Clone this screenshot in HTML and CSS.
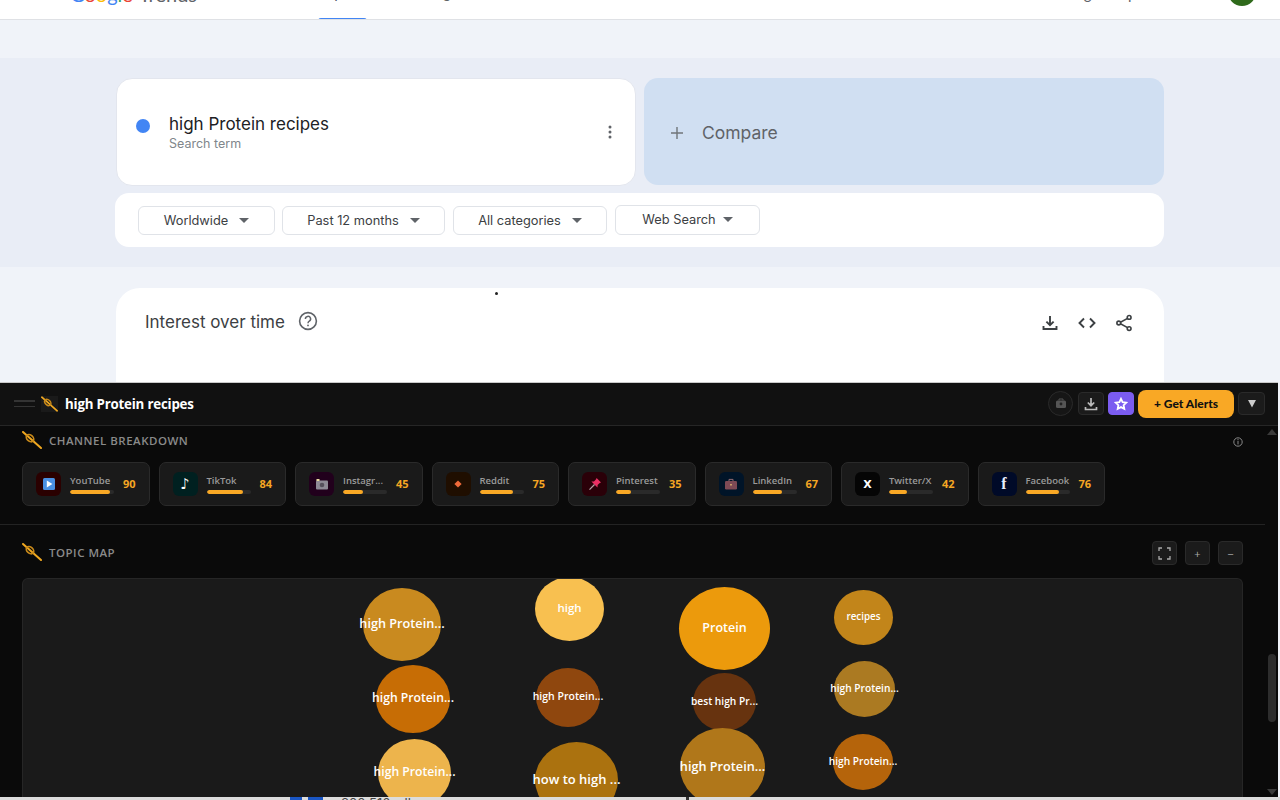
FILE: index.html
```html
<!DOCTYPE html>
<html lang="en">
<head>
<meta charset="utf-8">
<title>Google Trends</title>
<link rel="stylesheet" href="styles.css">
</head>
<body>
<svg class="defs" width="0" height="0" aria-hidden="true">
  <symbol id="wheat" viewBox="0 0 20 18">
    <path d="M1 1L19 17" stroke="#f0a820" stroke-width="2" stroke-linecap="round" fill="none"/>
    <ellipse cx="8" cy="7.2" rx="4.2" ry="3" transform="rotate(42 8 7.2)" fill="none" stroke="#c98a1a" stroke-width="1.7"/>
  </symbol>
</svg>
<div class="app">
  <header class="topbar">
    <div class="brand"><span class="g-b">G</span><span class="g-r">o</span><span class="g-y">o</span><span class="g-b">g</span><span class="g-g">l</span><span class="g-r">e</span> <span class="brand-t">Trends</span></div>
    <nav class="tabs">
      <span class="tab tab-active">Explore</span>
      <span class="tab">Trending now</span>
    </nav>
    <span class="top-link">Sign up</span>
    <span class="avatar"></span>
  </header>
  <div class="spacer"></div>
  <section class="band">
    <div class="terms">
      <div class="term">
        <span class="dot"></span>
        <div class="term-text">
          <div class="term-name">high Protein recipes</div>
          <div class="term-sub">Search term</div>
        </div>
        <svg class="kebab" width="4" height="14" viewBox="0 0 4 14"><circle cx="2" cy="2" r="1.5"/><circle cx="2" cy="7" r="1.5"/><circle cx="2" cy="12" r="1.5"/></svg>
      </div>
      <div class="compare">
        <svg width="14" height="14" viewBox="0 0 14 14"><path d="M7 1v12M1 7h12" stroke="#70757a" stroke-width="1.4"/></svg>
        <span>Compare</span>
      </div>
    </div>
    <div class="filters">
      <div class="filter f1">Worldwide<i class="caret"></i></div>
      <div class="filter f2">Past 12 months<i class="caret"></i></div>
      <div class="filter f3">All categories<i class="caret"></i></div>
      <div class="filter f4">Web Search<i class="caret"></i></div>
    </div>
  </section>
  <section class="lower">
    <div class="iot">
      <h2 class="iot-title">Interest over time</h2>
      <svg class="help" width="20" height="20" viewBox="0 0 20 20"><circle cx="10" cy="10" r="8.4" fill="none" stroke="#5f6368" stroke-width="1.6"/><path d="M7.4 8a2.6 2.6 0 1 1 3.9 2.2c-.9.5-1.3 1-1.3 2" fill="none" stroke="#5f6368" stroke-width="1.5"/><circle cx="10" cy="14.4" r=".9" fill="#5f6368"/></svg>
      <div class="iot-tools">
        <svg width="18" height="18" viewBox="0 0 18 18"><path d="M9 2v9M5.4 7.6L9 11.2l3.6-3.6M2.5 12v3h13v-3" fill="none" stroke="#3c4043" stroke-width="1.9"/></svg>
        <svg width="20" height="18" viewBox="0 0 20 18"><path d="M7 4.5L2.5 9 7 13.5M13 4.5L17.5 9 13 13.5" fill="none" stroke="#3c4043" stroke-width="1.9"/></svg>
        <svg width="18" height="18" viewBox="0 0 20 20"><path d="M15.5 4L4.500 10l11 6" fill="none" stroke="#3c4043" stroke-width="1.8"/><circle cx="15.700" cy="3.800" r="2.100" fill="#fff" stroke="#3c4043" stroke-width="1.800"/><circle cx="4.200" cy="10" r="2.100" fill="#fff" stroke="#3c4043" stroke-width="1.800"/><circle cx="15.700" cy="16.200" r="2.100" fill="#fff" stroke="#3c4043" stroke-width="1.800"/></svg>
      </div>
    </div>
    <span class="speck"></span>
  </section>
  <section class="panel">
    <div class="panel-head">
      <span class="burger"><i></i><i></i></span>
      <span class="head-icon"><svg width="17" height="16"><use href="#wheat"/></svg></span>
      <h1 class="panel-title">high Protein recipes</h1>
      <div class="head-actions">
        <button class="round-btn"><svg width="12" height="11" viewBox="0 0 12 11"><rect x="1" y="2.500" width="10" height="7.500" rx="1.500" fill="#555"/><path d="M4 2.500V1h4v1.500" stroke="#555" fill="none"/><circle cx="6" cy="6" r="1.400" fill="#222"/></svg></button>
        <button class="sq-btn"><svg width="14" height="14" viewBox="0 0 14 14"><path d="M7 1v7.500M3.800 5.500L7 8.700l3.200-3.200M1.500 10v2.500h11V10" fill="none" stroke="#bbb" stroke-width="1.700"/></svg></button>
        <button class="sq-btn star-btn"><svg width="14" height="14" viewBox="0 0 14 14"><path d="M7 1.800l1.600 3.400 3.700.5-2.700 2.500.7 3.700L7 10.100l-3.300 1.800.7-3.700L1.700 5.700l3.700-.5z" fill="none" stroke="#fff" stroke-width="1.800"/></svg></button>
        <button class="alert-btn">+ Get Alerts</button>
        <button class="sq-btn drop-btn"><svg width="10" height="9" viewBox="0 0 10 9"><path d="M1 1h8L5 8.400z" fill="#ccc"/></svg></button>
      </div>
    </div>
    <div class="panel-body">
      <div class="scrollbar">
        <i class="sb-up"></i>
        <i class="sb-thumb"></i>
        <i class="sb-down"></i>
      </div>
      <div class="sec sec-channels">
        <div class="sec-head">
          <svg width="20" height="18"><use href="#wheat"/></svg>
          <h3 class="sec-title">CHANNEL BREAKDOWN</h3>
          <svg class="info" width="10" height="10" viewBox="0 0 10 10"><circle cx="5" cy="5" r="4.200" fill="none" stroke="#888"/><path d="M5 4v3.400" stroke="#888"/><circle cx="5" cy="2.700" r=".6" fill="#888"/></svg>
        </div>
        <div class="channels">
          <div class="ch">
            <span class="ch-ic ic-yt"><svg width="14" height="14" viewBox="0 0 14 14"><rect x="1" y="1" width="12" height="12" rx="1.500" fill="#4a90e2"/><path d="M4.800 3.600L10.400 7l-5.600 3.400z" fill="#fff"/></svg></span>
            <div class="ch-mid"><span class="ch-name">YouTube</span><span class="bar"><i class="fill w90"></i></span></div>
            <b class="ch-val">90</b>
          </div>
          <div class="ch">
            <span class="ch-ic ic-tt"><span class="glyph glyph-n">♪</span></span>
            <div class="ch-mid"><span class="ch-name">TikTok</span><span class="bar"><i class="fill w84"></i></span></div>
            <b class="ch-val">84</b>
          </div>
          <div class="ch">
            <span class="ch-ic ic-ig"><svg width="14" height="12" viewBox="0 0 14 12"><rect x="1" y="2.500" width="12" height="9" rx="1" fill="#8e8a96"/><circle cx="7" cy="7" r="2.300" fill="#55505c"/><rect x="1.500" y="1" width="3" height="2" fill="#e8d9a0"/></svg></span>
            <div class="ch-mid"><span class="ch-name">Instagr...</span><span class="bar"><i class="fill w45"></i></span></div>
            <b class="ch-val">45</b>
          </div>
          <div class="ch">
            <span class="ch-ic ic-rd"><svg width="8" height="8" viewBox="0 0 8 8"><path d="M4 .4L7.600 4 4 7.600.4 4z" fill="#ef6a3a"/></svg></span>
            <div class="ch-mid"><span class="ch-name">Reddit</span><span class="bar"><i class="fill w75"></i></span></div>
            <b class="ch-val">75</b>
          </div>
          <div class="ch">
            <span class="ch-ic ic-pt"><svg width="14" height="14" viewBox="0 0 14 14"><path d="M8.600 1L13 5.400 11.700 5.900 9.600 8 9.500 10.600 3.400 4.500 6 4.400 8.100 2.300z" fill="#ea2f63"/><path d="M6.500 7.500L1.500 12.700" stroke="#b4a3a8" stroke-width="1.200"/></svg></span>
            <div class="ch-mid"><span class="ch-name">Pinterest</span><span class="bar"><i class="fill w35"></i></span></div>
            <b class="ch-val">35</b>
          </div>
          <div class="ch">
            <span class="ch-ic ic-li"><svg width="14" height="12" viewBox="0 0 14 12"><rect x="1" y="3" width="12" height="8.500" rx="1.200" fill="#7d4a55"/><path d="M5 3V1.400h4V3" stroke="#8f6a70" fill="none"/><rect x="6" y="6" width="2" height="1.500" fill="#c9a06a"/></svg></span>
            <div class="ch-mid"><span class="ch-name">LinkedIn</span><span class="bar"><i class="fill w67"></i></span></div>
            <b class="ch-val">67</b>
          </div>
          <div class="ch">
            <span class="ch-ic ic-x"><span class="glyph glyph-x">X</span></span>
            <div class="ch-mid"><span class="ch-name">Twitter/X</span><span class="bar"><i class="fill w42"></i></span></div>
            <b class="ch-val">42</b>
          </div>
          <div class="ch">
            <span class="ch-ic ic-fb"><span class="glyph glyph-f">f</span></span>
            <div class="ch-mid"><span class="ch-name">Facebook</span><span class="bar"><i class="fill w76"></i></span></div>
            <b class="ch-val">76</b>
          </div>
        </div>
      </div>
      <div class="sec sec-map">
        <div class="sec-head map-head">
          <svg width="20" height="18"><use href="#wheat"/></svg>
          <h3 class="sec-title">TOPIC MAP</h3>
          <div class="map-tools">
            <button class="map-btn"><svg width="13" height="13" viewBox="0 0 13 13"><path d="M1 4V1h3M9 1h3v3M12 9v3H9M4 12H1V9" fill="none" stroke="#aaa" stroke-width="1.300"/></svg></button>
            <button class="map-btn">+</button>
            <button class="map-btn">−</button>
          </div>
        </div>
        <div class="map">
          <div class="bub b1 t127">high Protein...</div>
          <div class="bub b2 t12">high</div>
          <div class="bub b3 t125">Protein</div>
          <div class="bub b4 t10">recipes</div>
          <div class="bub b5 t123">high Protein...</div>
          <div class="bub b6 t11">high Protein...</div>
          <div class="bub b7 t102">best high Pr...</div>
          <div class="bub b8 t102">high Protein...</div>
          <div class="bub b9 t123">high Protein...</div>
          <div class="bub b10 t13">how to high ...</div>
          <div class="bub b11 t127">high Protein...</div>
          <div class="bub b12 t102">high Protein...</div>
        </div>
      </div>
    </div>
  </section>
  <footer class="strip"><i class="strip-blue sb1"></i><i class="strip-blue sb2"></i><span class="strip-text">800 516 s ll</span><i class="strip-mark"></i></footer>
</div>
</body>
</html>
```

FILE: styles.css
```css
* { box-sizing: border-box; }
html, body { margin: 0; height: 100%; overflow: hidden; }
body { font-family: "Open Sans", "Noto Sans", sans-serif; background: #f0f3f9; }
.defs { position: absolute; }
button { font: inherit; padding: 0; border: 0; cursor: pointer; }
h1, h2, h3 { margin: 0; font-weight: inherit; }

.app { width: 1280px; height: 800px; display: flex; flex-direction: column; }

.topbar { height: 20px; flex: none; background: #fff; border-bottom: 1px solid #dfe1e5; display: flex; align-items: flex-end; padding-left: 70px; font-family: "Lato", sans-serif; overflow: hidden; position: relative; }
.brand { width: 248px; font-size: 20px; line-height: 26px; margin-bottom: 12px; color: #5f6368; white-space: nowrap; flex: none; }
.g-b { color: #4285f4; } .g-r { color: #ea4335; } .g-y { color: #fbbc05; } .g-g { color: #34a853; }
.brand-t { margin-left: 1px; }
.tabs { display: flex; flex: none; width: 700px; height: 30px; margin-bottom: -1px; align-items: flex-end; }
.tab { font-size: 15px; line-height: 20px; padding: 0 0 6px; color: #5f6368; white-space: nowrap; width: 49px; margin-right: 27px; text-align: center; position: relative; top: -12px; }
.tab-active { color: #4a5568; }
.tab-active::after { content: ""; position: absolute; left: 0; right: 0; bottom: -13px; height: 3px; border-radius: 3px 3px 0 0; background: #4285f4; }
.top-link { font-size: 15px; color: #5f6368; line-height: 20px; word-spacing: 16px; position: absolute; left: 1072px; top: -17px; }
.avatar { position: absolute; left: 1228px; top: -22px; width: 28px; height: 28px; border-radius: 50%; background: #2f6a1b; }

.spacer { height: 38px; flex: none; }
.band { height: 209px; flex: none; background: #e9edf6; padding: 20px 116px 0; font-family: "Inter", "Lato", sans-serif; }
.terms { display: flex; gap: 8px; height: 108px; }
.term { width: 520px; height: 108px; background: #fff; border: 1px solid #e3e6ee; border-radius: 16px; display: flex; align-items: center; padding: 0 23px 0 19px; }
.dot { width: 14px; height: 14px; border-radius: 50%; background: #4285f4; margin-right: 19px; flex: none; margin-top: -13px; }
.term-text { flex: 1; }
.term-name { font-size: 17px; line-height: 22px; color: #202124; }
.term-sub { font-size: 12.500px; line-height: 17px; color: #80868b; margin-top: 0; }
.kebab { fill: #5f6368; }
.compare { width: 520px; height: 107px; background: #d0dff2; border-radius: 14px; display: flex; align-items: center; gap: 18px; padding: 2px 0 0 26px; font-size: 17.500px; color: #5f6368; }
.filters { margin: 7px 0 0 -1px; width: 1049px; height: 54px; background: #fff; border-radius: 14px; display: flex; align-items: flex-start; padding: 13px 0 0 23px; gap: 7px; }
.filter { height: 29px; display: flex; align-items: center; justify-content: center; gap: 11px; background: #fff; border: 1px solid #e0e3e8; border-radius: 6px; font-size: 12.800px; color: #3c4043; white-space: nowrap; }
.f1 { width: 137px; } .f2 { width: 163px; } .f3 { width: 154px; margin-left: 1px; } .f4 { width: 145px; height: 30px; margin-top: -1px; margin-left: 1px; gap: 7px; padding-bottom: 1px; }
.caret { width: 0; height: 0; border: 5px solid transparent; border-top: 5px solid #5f6368; border-bottom: 0; display: block; }

.lower { flex: 1; padding: 21px 116px 0; position: relative; min-height: 0; font-family: "Inter", "Lato", sans-serif; }
.iot { height: 94px; background: #fff; border-radius: 24px 24px 0 0; display: flex; align-items: flex-start; padding: 22px 31px 0 29px; }
.iot-title { font-size: 17px; line-height: 25px; color: #3c4043; }
.help { margin: 1px 0 0 13px; }
.iot-tools { margin-left: auto; display: flex; gap: 18px; padding-top: 4px; align-items: center; }
.speck { position: absolute; left: 495px; top: 25px; width: 3px; height: 3px; border-radius: 50%; background: #222; }

.panel { height: 415px; flex: none; background: #0a0a0a; border-top: 1px solid #c9c9c9; display: flex; flex-direction: column; margin-right: 2px; overflow: hidden; color: #fff; }
.panel-head { height: 43px; flex: none; background: #111; border-bottom: 1px solid #262626; display: flex; align-items: center; padding: 0 13px 1px 14px; }
.burger { display: flex; flex-direction: column; gap: 4px; width: 21px; margin-right: 6px; }
.burger i { display: block; height: 1.500px; background: #343434; }
.head-icon { width: 17px; height: 16px; margin-right: 7px; background: #1a1a1a; display: flex; }
.panel-title { font-size: 13.300px; font-weight: 700; letter-spacing: -.2px; white-space: nowrap; }
.head-actions { margin-left: auto; display: flex; align-items: center; gap: 4px; }
.round-btn { width: 25px; height: 25px; border-radius: 50%; background: #161616; border: 1px solid #2a2a2a; display: flex; align-items: center; justify-content: center; margin-right: 1px; }
.sq-btn { width: 26px; height: 23px; border-radius: 4px; background: #1b1b1b; border: 1px solid #2a2a2a; display: flex; align-items: center; justify-content: center; }
.star-btn { background: #7b5cf0; border-color: #7b5cf0; }
.alert-btn { width: 96px; height: 28px; border-radius: 8px; background: #f9a825; color: #111; font-family: "Lato", sans-serif; font-weight: 900; font-size: 12px; }
.drop-btn { width: 27px; }

.panel-body { flex: 1; position: relative; min-height: 0; display: flex; flex-direction: column; }
.scrollbar { position: absolute; right: 0; top: 0; bottom: 0; width: 13px; }
.sb-up, .sb-down { position: absolute; right: 1px; width: 0; height: 0; border-left: 5px solid transparent; border-right: 5px solid transparent; }
.sb-up { top: 3px; border-bottom: 6px solid #3a3a3a; }
.sb-down { bottom: 2px; border-top: 6px solid #3a3a3a; }
.sb-thumb { position: absolute; right: 2px; top: 228px; width: 8px; height: 68px; border-radius: 4px; background: #2d2d2d; }

.sec-head { display: flex; align-items: center; gap: 7px; padding-left: 22px; }
.sec-title { font-size: 11.500px; font-weight: 600; letter-spacing: .5px; color: #8a8a8a; white-space: nowrap; }
.sec-channels { height: 99px; flex: none; margin-right: 13px; border-bottom: 1px solid #232323; padding-top: 5px; }
.sec-channels .sec-head { height: 18px; position: relative; }
.info { position: absolute; right: 22px; top: 6px; }
.channels { display: flex; gap: 9px; padding: 13px 0 0 22px; }
.ch { width: 127.500px; height: 44px; flex: none; background: #1a1a1a; border: 1px solid #2a2a2a; border-radius: 7px; display: flex; align-items: center; padding-left: 13px; }
.ch-ic { width: 25px; height: 24px; flex: none; border-radius: 6px; display: flex; align-items: center; justify-content: center; margin-right: 9px; }
.ic-yt { background: #2a0000; } .ic-tt { background: #002020; } .ic-ig { background: #21001c; } .ic-rd { background: #1f0e00; } .ic-pt { background: #2a0008; } .ic-li { background: #001428; } .ic-x { background: #050505; } .ic-fb { background: #000a28; }
.glyph { color: #fff; line-height: 1; font-family: "DejaVu Sans", sans-serif; }
.glyph-n { font-size: 15px; font-weight: 700; }
.glyph-x { font-size: 11px; font-weight: 700; }
.glyph-f { font-family: "Liberation Serif", serif; font-weight: 700; font-size: 16px; color: #e6ecff; }
.ch-mid { width: 44px; flex: none; display: flex; flex-direction: column; margin-top: -1px; }
.ch-name { font-size: 9.500px; line-height: 14px; font-weight: 600; color: #9a9a9a; white-space: nowrap; }
.bar { display: block; height: 4px; width: 44px; border-radius: 2px; background: #2a2a2a; margin-top: 2px; overflow: hidden; }
.fill { display: block; height: 100%; background: #f9a825; border-radius: 2px; }
.w90 { width: 90%; } .w84 { width: 84%; } .w45 { width: 45%; } .w75 { width: 75%; } .w35 { width: 35%; } .w67 { width: 67%; } .w42 { width: 42%; } .w76 { width: 76%; }
.ch-val { margin: -2px 0 0 9px; font-size: 11px; font-weight: 700; color: #f5a623; }

.sec-map { flex: 1; min-height: 0; display: flex; flex-direction: column; padding-right: 35px; }
.map-head { height: 53px; flex: none; padding-top: 1px; }
.map-tools { margin: 2px 0 0 auto; display: flex; gap: 8px; }
.map-btn { width: 25px; height: 24px; border-radius: 4px; background: #1b1b1b; border: 1px solid #2a2a2a; color: #aaa; font-size: 11px; display: flex; align-items: center; justify-content: center; }
.map { margin-left: 22px; flex: 1; min-height: 0; position: relative; overflow: hidden; background: #1a1a1a; border: 1px solid #262626; border-bottom: 0; border-radius: 6px 6px 0 0; }
.bub { position: absolute; border-radius: 50%; display: flex; align-items: center; justify-content: center; padding-bottom: 3px; font-family: "Open Sans", sans-serif; font-weight: 600; color: #fff; white-space: nowrap; }
.t13 { font-size: 13px; } .t127 { font-size: 12.700px; } .t125 { font-size: 12.500px; } .t123 { font-size: 12.200px; } .t12 { font-size: 11.500px; } .t11 { font-size: 10.500px; } .t102 { font-size: 10.200px; } .t10 { font-size: 9.800px; }
.b1 { left: 340px; top: 9px; width: 78px; height: 73px; background: #c98a1f; }
.b2 { left: 512px; top: -2px; width: 69px; height: 64px; background: #f8c050; }
.b3 { left: 656px; top: 8px; width: 91px; height: 83px; background: #ec9a0c; }
.b4 { left: 811px; top: 11px; width: 59px; height: 55px; background: #c2851a; }
.b5 { left: 353px; top: 86px; width: 74px; height: 68px; background: #c76d05; }
.b6 { left: 513px; top: 89px; width: 64px; height: 59px; background: #8f470e; }
.b7 { left: 670px; top: 94px; width: 63px; height: 58px; background: #67330f; }
.b8 { left: 811px; top: 82px; width: 61px; height: 56px; background: #ab7a22; }
.b9 { left: 355px; top: 160px; width: 73px; height: 68px; background: #edb44c; }
.b10 { left: 512px; top: 163px; width: 83px; height: 76px; background: #ab720f; }
.b11 { left: 657px; top: 149px; width: 85px; height: 78px; background: #b0771a; }
.b12 { left: 810px; top: 155px; width: 60px; height: 56px; background: #b5640b; }

.strip { height: 3px; flex: none; background: #dcdcdc; position: relative; overflow: hidden; }
.strip-blue { position: absolute; top: 0; height: 3px; background: #1a56c4; }
.sb1 { left: 290px; width: 12px; } .sb2 { left: 308px; width: 15px; }
.strip-text { position: absolute; left: 341px; top: -1px; font-size: 13px; line-height: 14px; color: #444; font-family: "Inter", sans-serif; }
.strip-mark { position: absolute; left: 686px; top: 0; width: 3px; height: 3px; background: #333; }
```
